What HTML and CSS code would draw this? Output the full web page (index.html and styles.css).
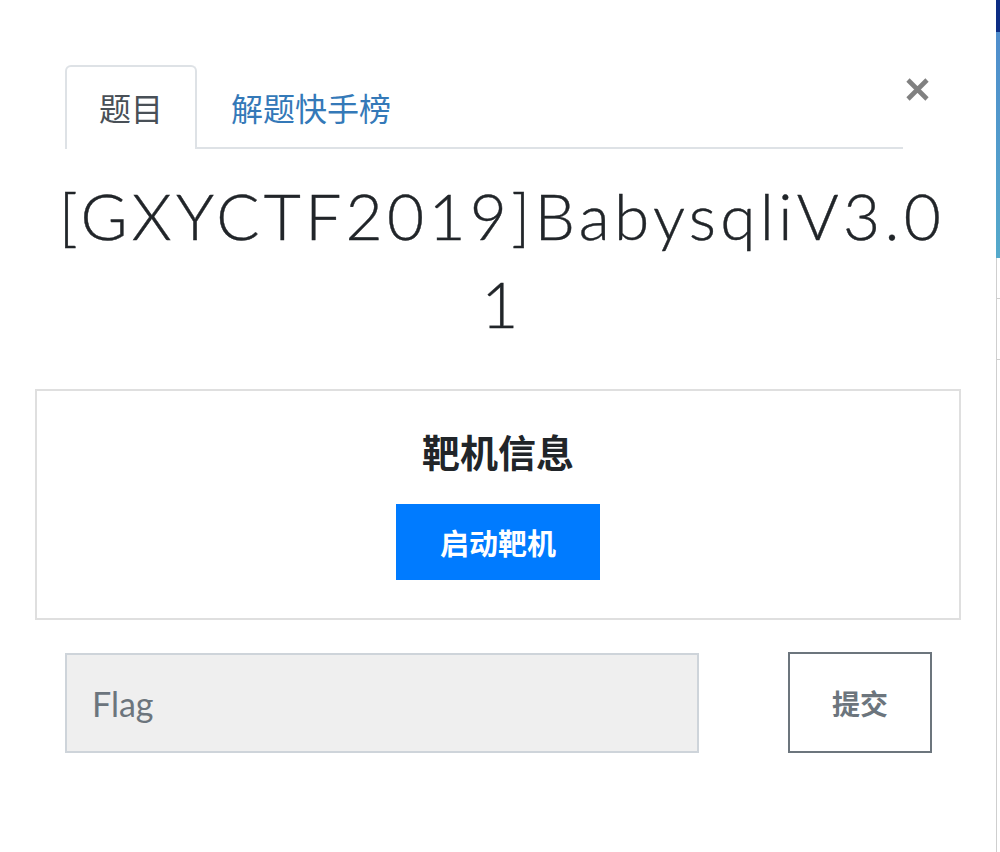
FILE: index.html
```html
<!DOCTYPE html>
<html lang="zh-CN">
<head>
<meta charset="utf-8">
<title>[GXYCTF2019]BabysqliV3.01</title>
<link rel="stylesheet" href="styles.css">
</head>
<body>
<div class="page">
  <div class="modal">
    <div class="modal-header">
      <ul class="tabs">
        <li class="tab active">题目</li>
        <li class="tab link">解题快手榜</li>
      </ul>
      <button class="close" aria-label="Close">
        <svg width="23" height="23" viewBox="0 0 23 23"><path d="M2 2 L21 21 M21 2 L2 21" stroke="#808080" stroke-width="4.6" fill="none"/></svg>
      </button>
    </div>
    <div class="modal-body">
      <h1 class="challenge-title">[GXYCTF2019]BabysqliV3.01</h1>
      <div class="target-box">
        <h3 class="target-title">靶机信息</h3>
        <button class="btn-start">启动靶机</button>
      </div>
      <form class="flag-form">
        <input class="flag-input" type="text" placeholder="Flag">
        <button class="btn-submit" type="button">提交</button>
      </form>
    </div>
  </div>
  <div class="strip">
    <div class="strip-navy"></div>
    <div class="strip-blue"></div>
    <div class="strip-rest">
      <div class="strip-seg"></div>
    </div>
  </div>
</div>
</body>
</html>
```
FILE: styles.css
```css
* { box-sizing: border-box; }
html, body { margin: 0; padding: 0; background: #fff; }
body {
  font-family: "Noto Sans CJK SC", "Noto Sans", sans-serif;
  color: #212529;
}
.page {
  display: flex;
  width: 1000px;
  height: 852px;
  overflow: hidden;
}
.modal {
  width: 996px;
  flex: none;
}
.modal-header {
  display: flex;
  align-items: flex-start;
  padding: 65px 64px 0 65px;
}
.tabs {
  list-style: none;
  margin: 0;
  padding: 0;
  display: flex;
  width: 838px;
  flex: none;
  border-bottom: 2px solid #dee2e6;
}
.tab {
  font-size: 32px;
  line-height: 48px;
  padding: 16px 32px;
  border: 2px solid transparent;
  border-bottom: 0;
  border-radius: 6px 6px 0 0;
  margin-bottom: -2px;
  padding-bottom: 18px;
}
.tab.active {
  color: #495057;
  border-color: #dee2e6;
  background: #fff;
}
.tab.link {
  color: #3479b8;
}
.close {
  margin: 13px 0 0 3px;
  padding: 0;
  border: 0;
  background: none;
  width: 23px;
  height: 23px;
  display: block;
  flex: none;
}
.close svg { display: block; }
.modal-body {
  padding: 0 35px;
}
.challenge-title {
  font-family: "Lato", sans-serif;
  font-weight: 300;
  font-size: 64px;
  line-height: 88px;
  text-align: center;
  word-break: break-all;
  margin: 23px 12px 0 20px;
  color: #212529;
  letter-spacing: 4.3px;
  -webkit-text-stroke: 0.4px #212529;
}
.target-box {
  margin-top: 41px;
  border: 2px solid #dfdfdf;
  height: 231px;
  display: flex;
  flex-direction: column;
  align-items: center;
  padding-top: 32px;
}
.target-title {
  margin: 0;
  font-size: 38px;
  line-height: 56px;
  font-weight: 700;
  color: #212529;
}
.btn-start {
  margin-top: 25px;
  width: 204px;
  height: 76px;
  border: 0;
  border-radius: 0;
  background: #007bff;
  color: #fff;
  font-family: "Noto Sans CJK SC", sans-serif;
  font-weight: 700;
  font-size: 29px;
  padding: 0;
}
.flag-form {
  display: flex;
  justify-content: space-between;
  align-items: flex-start;
  margin: 33px 29px 0 30px;
}
.flag-input {
  width: 634px;
  height: 100px;
  border: 2px solid #ced4da;
  background: #efefef;
  padding: 0 25px;
  font-family: "Lato", sans-serif;
  font-size: 34px;
  color: #495057;
  outline: none;
  border-radius: 0;
}
.flag-input::placeholder {
  color: #6c757d;
  opacity: 1;
}
.btn-submit {
  width: 144px;
  height: 101px;
  margin-top: -1px;
  border: 2.5px solid #6c757d;
  background: #fff;
  color: #6c757d;
  font-family: "Noto Sans CJK SC", sans-serif;
  font-weight: 700;
  font-size: 28px;
  border-radius: 0;
  padding: 0;
}
.strip {
  width: 4px;
  flex: none;
  display: flex;
  flex-direction: column;
}
.strip-navy {
  height: 32px;
  background: #0d2d84;
}
.strip-blue {
  height: 226px;
  background: linear-gradient(#4f8dcc, #55aacb);
}
.strip-rest {
  flex: 1;
  border-left: 1px solid #cfcfcf;
  padding-top: 40px;
}
.strip-seg {
  height: 62px;
  border-top: 1px solid #cfcfcf;
  border-bottom: 1px solid #cfcfcf;
}
```
